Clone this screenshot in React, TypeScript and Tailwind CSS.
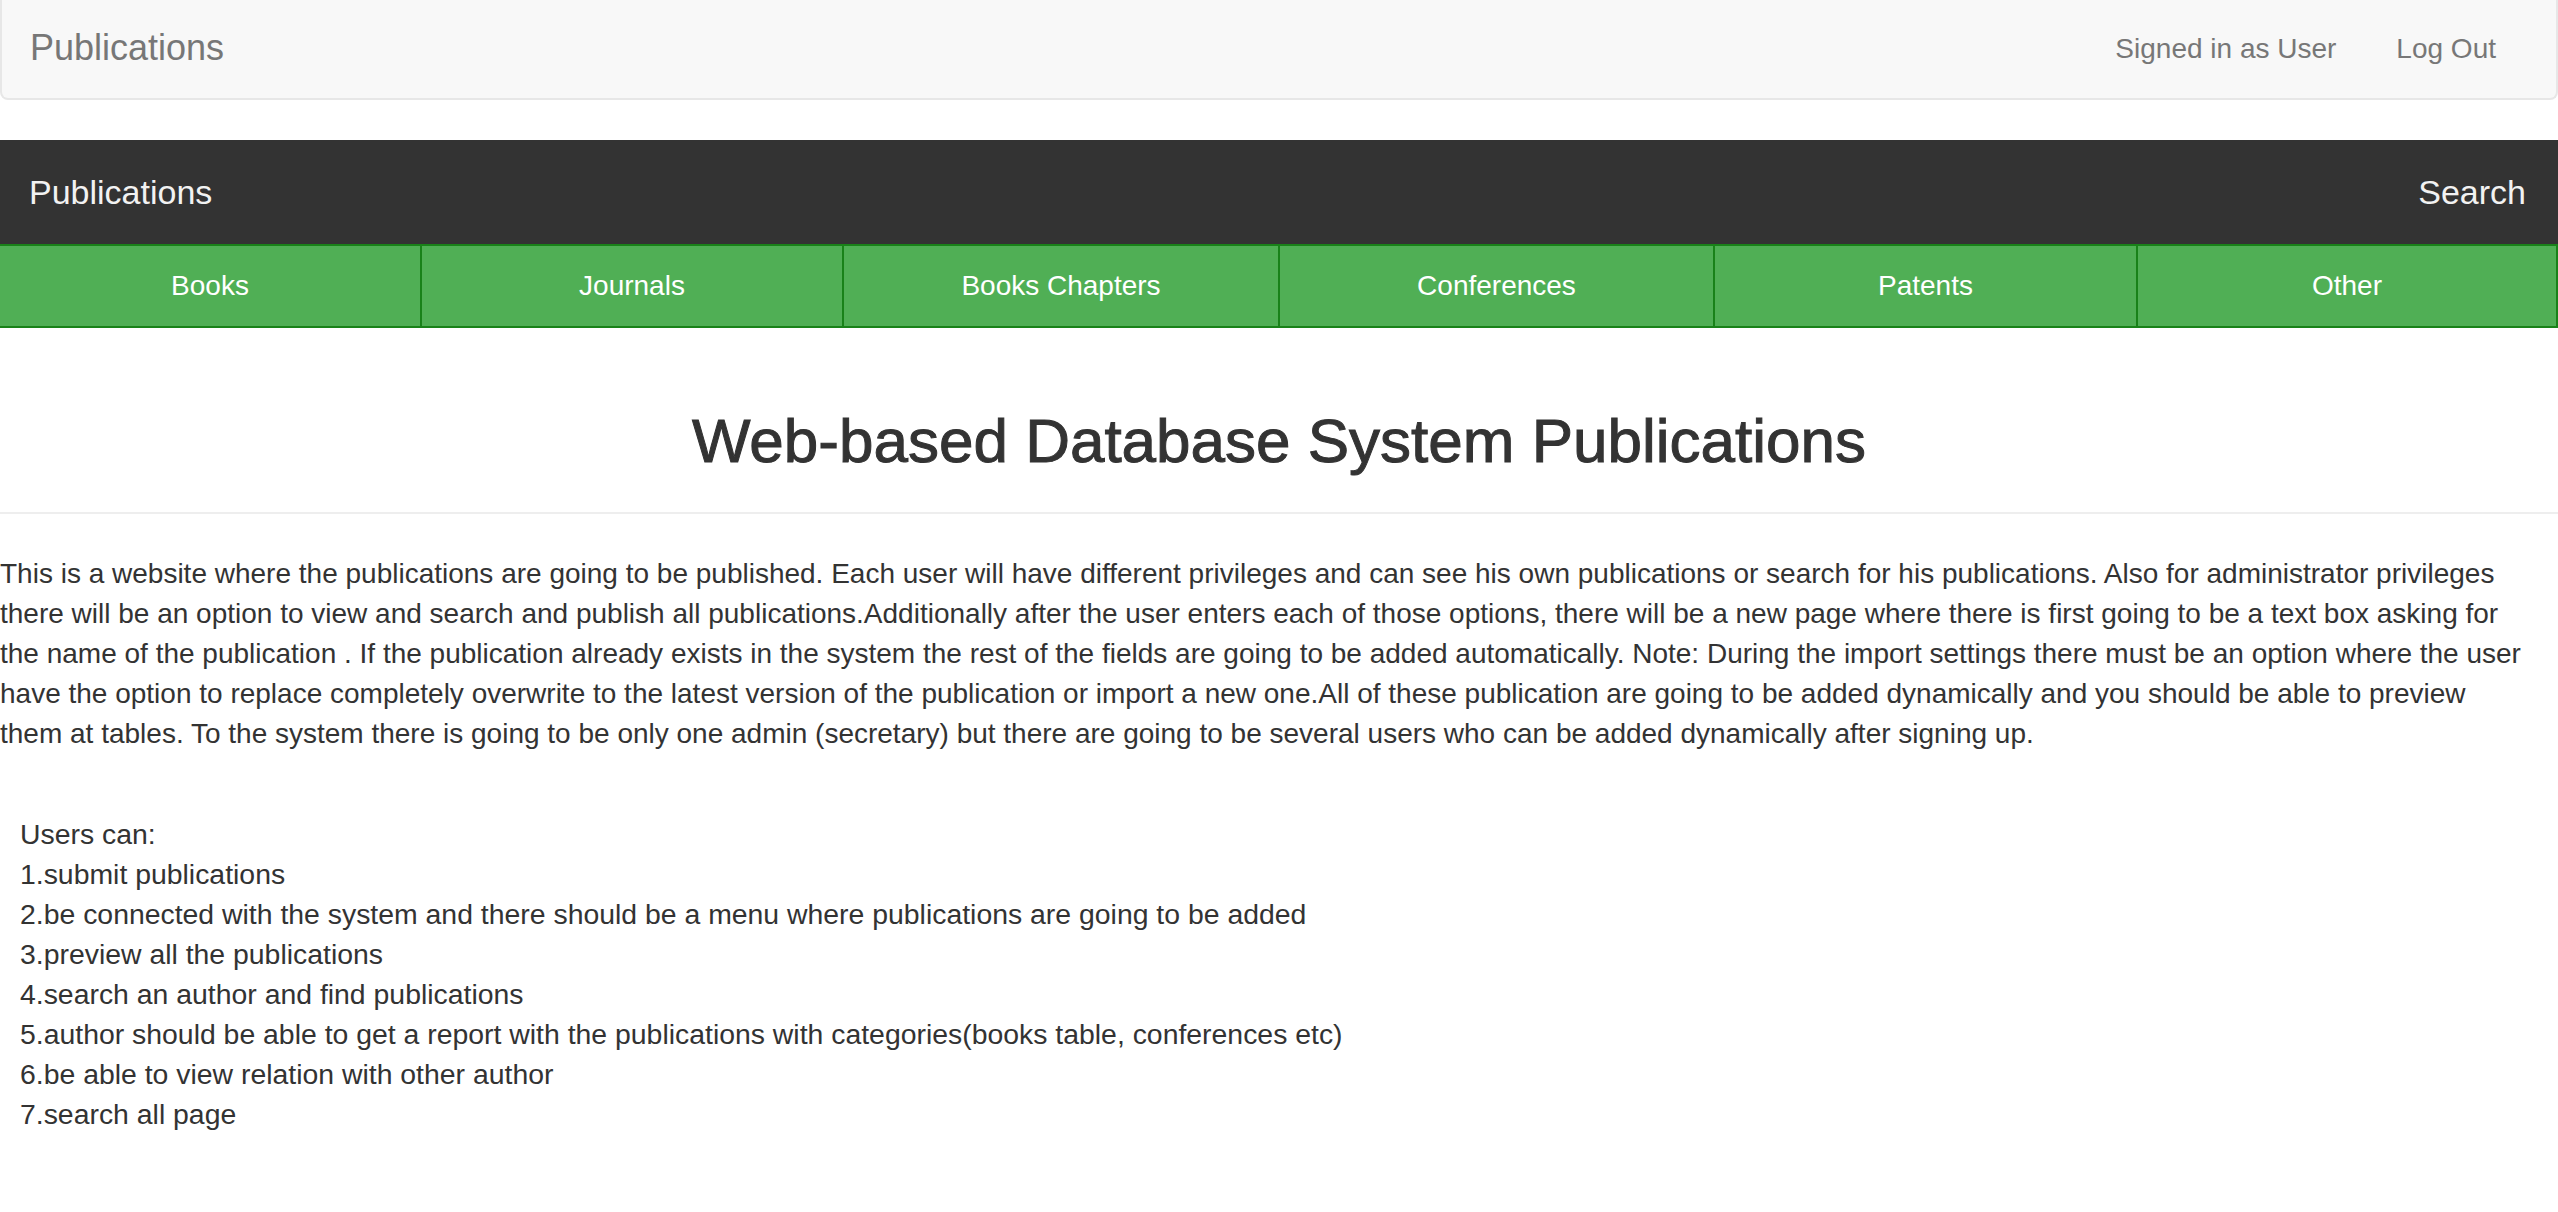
import React from 'react';

const tabs = ['Books', 'Journals', 'Books Chapters', 'Conferences', 'Patents', 'Other'];

const abilities = [
  '1.submit publications',
  '2.be connected with the system and there should be a menu where publications are going to be added',
  '3.preview all the publications',
  '4.search an author and find publications',
  '5.author should be able to get a report with the publications with categories(books table, conferences etc)',
  '6.be able to view relation with other author',
  '7.search all page',
];

const App: React.FC = () => {
  return (
    <div className="min-h-screen bg-white font-['Liberation_Sans',Arial,sans-serif] text-[#333]">
      {/* top bootstrap-ish navbar */}
      <nav className="flex h-[100px] items-center justify-between rounded-b-lg border-x-2 border-b-2 border-[#e7e7e7] bg-[#f8f8f8] pl-[28px] pr-[60px]">
        <a className="-mt-[2px] text-[36px] leading-[40px] text-[#777]">Publications</a>
        <ul className="-mt-[1px] flex text-[28px] leading-[40px] text-[#777]">
          <li className="px-[30px]">Signed in as User</li>
          <li className="pl-[30px]">Log Out</li>
        </ul>
      </nav>

      {/* dark bar */}
      <div className="mt-[40px] flex h-[104px] items-center justify-between bg-[#333] pl-[29px] pr-[32px] text-[34px] text-[#f2f2f2]">
        <a>Publications</a>
        <a>Search</a>
      </div>

      {/* category tabs */}
      <div className="grid h-[84px] grid-cols-[422px_422px_436px_435px_423px_1fr] border-y-2 border-[#198219] bg-[#50af55] text-[28px] text-white">
        {tabs.map((t) => (
          <div key={t} className="flex items-center justify-center border-r-2 border-[#198219]">
            {t}
          </div>
        ))}
      </div>

      <div className="mt-[80px] mb-[40px] border-b-2 border-[#eee] pb-[18px]">
        <h1 className="mb-[20px] text-center text-[62px] leading-[66px] font-medium text-[#333] [-webkit-text-stroke:1px_#333]">
          Web-based Database System Publications
        </h1>
      </div>

      <p className="text-[28px] leading-[40px]">
        This is a website where the publications are going to be published. Each user will have different privileges and can see his own publications or search for his publications. Also for administrator privileges
        <br />
        there will be an option to view and search and publish all publications.Additionally after the user enters each of those options, there will be a new page where there is first going to be a text box asking for
        <br />
        the name of the publication . If the publication already exists in the system the rest of the fields are going to be added automatically. Note: During the import settings there must be an option where the user
        <br />
        have the option to replace completely overwrite to the latest version of the publication or import a new one.All of these publication are going to be added dynamically and you should be able to preview
        <br />
        them at tables. To the system there is going to be only one admin (secretary) but there are going to be several users who can be added dynamically after signing up.
      </p>

      <div className="mt-[60px] pl-[20px] text-[28.4px] leading-[40px]">
        <div>Users can:</div>
        {abilities.map((a) => (
          <div key={a}>{a}</div>
        ))}
      </div>
    </div>
  );
};

export default App;
